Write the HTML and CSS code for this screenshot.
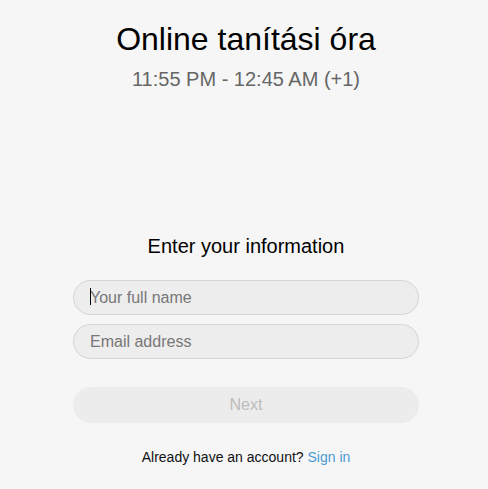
FILE: index.html
```html
<!DOCTYPE html>
<html lang="hu">
<head>
<meta charset="utf-8">
<title>Online tanítási óra</title>
<link rel="stylesheet" href="styles.css">
</head>
<body>
<main class="page">
  <header class="event">
    <h1 class="event-title">Online tanítási óra</h1>
    <p class="event-time">11:55 PM - 12:45 AM (+1)</p>
  </header>
  <form class="signup">
    <h2 class="signup-title">Enter your information</h2>
    <div class="field field-focused">
      <input class="text-input" type="text" placeholder="Your full name">
      <span class="caret"></span>
    </div>
    <div class="field">
      <input class="text-input" type="email" placeholder="Email address">
    </div>
    <button class="next-btn" type="button" disabled>Next</button>
    <p class="signin">Already have an account? <a href="#" class="signin-link">Sign in</a></p>
  </form>
</main>
</body>
</html>
```
FILE: styles.css
```css
html, body {
  margin: 0;
  padding: 0;
  background: #f6f6f6;
}
body {
  font-family: "Liberation Sans", Arial, sans-serif;
  color: #000;
}
.page {
  display: flex;
  flex-direction: column;
  align-items: center;
  padding-left: 4px;
  padding-top: 21px;
}
.event {
  display: flex;
  flex-direction: column;
  align-items: center;
}
.event-title {
  margin: 0;
  font-size: 32px;
  line-height: 37px;
  font-weight: normal;
  color: #000;
}
.event-time {
  margin: 10px 0 0;
  font-size: 20px;
  line-height: 23px;
  color: #666;
}
.signup {
  margin-top: 144px;
  width: 346px;
  display: flex;
  flex-direction: column;
  align-items: stretch;
}
.signup-title {
  margin: 0 0 22px;
  text-align: center;
  font-size: 20px;
  line-height: 23px;
  font-weight: normal;
}
.field {
  position: relative;
  margin-bottom: 9px;
}
.text-input {
  display: block;
  box-sizing: border-box;
  width: 100%;
  height: 35px;
  border: 1px solid #d4d4d4;
  border-radius: 18px;
  background: #ededed;
  padding: 0 16px;
  font-family: "Liberation Sans", Arial, sans-serif;
  font-size: 16px;
  color: #333;
  outline: none;
}
.text-input::placeholder {
  color: #777;
}
.caret {
  position: absolute;
  left: 17px;
  top: 8px;
  width: 1px;
  height: 17px;
  background: #000;
}
.next-btn {
  margin-top: 19px;
  height: 36px;
  border: none;
  border-radius: 18px;
  background: #ececec;
  color: #bbb;
  font-family: "Liberation Sans", Arial, sans-serif;
  font-size: 16px;
  cursor: default;
}
.signin {
  margin: 26px 0 0;
  text-align: center;
  font-size: 14px;
  line-height: 16px;
  color: #111;
}
.signin-link {
  color: #4a9ad4;
  text-decoration: none;
}
```
